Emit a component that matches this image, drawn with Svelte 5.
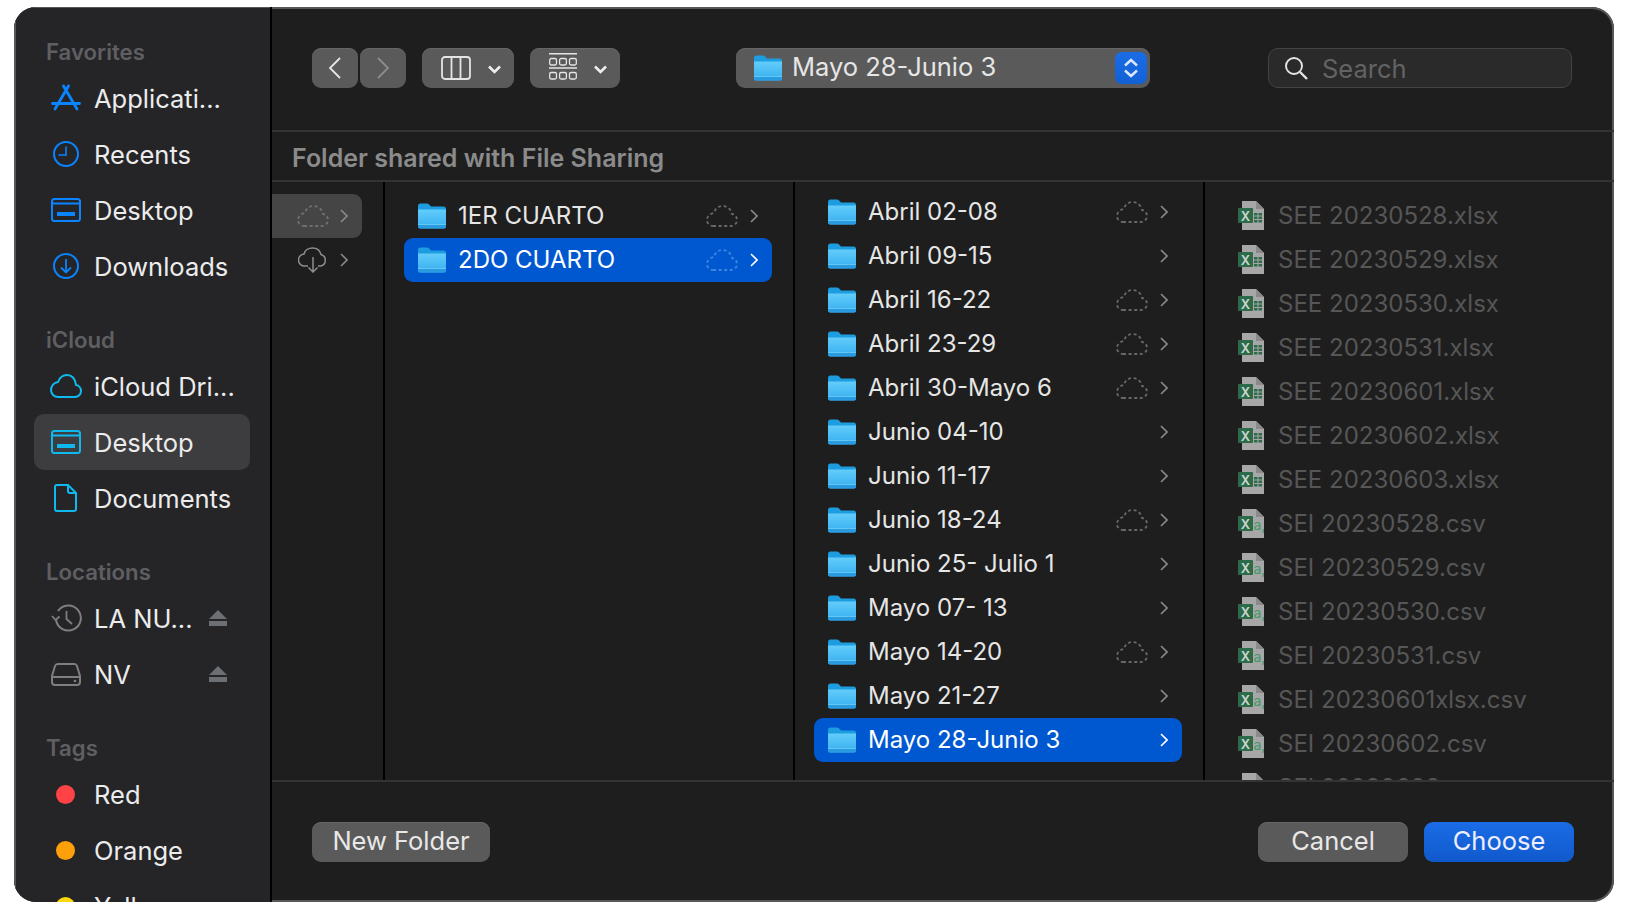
<script>
  const sections = [
    { title: 'Favorites', items: [
      { icon: 'apps', label: 'Applicati...', tone: 'blue' },
      { icon: 'clock', label: 'Recents', tone: 'blue' },
      { icon: 'desk', label: 'Desktop', tone: 'blue' },
      { icon: 'down', label: 'Downloads', tone: 'blue' }
    ]},
    { title: 'iCloud', items: [
      { icon: 'cloud', label: 'iCloud Dri...', tone: 'cyan' },
      { icon: 'desk', label: 'Desktop', tone: 'cyan', active: true },
      { icon: 'doc', label: 'Documents', tone: 'cyan' }
    ]},
    { title: 'Locations', items: [
      { icon: 'machine', label: 'LA NU...', tone: 'gray', eject: true },
      { icon: 'drive', label: 'NV', tone: 'gray', eject: true }
    ]},
    { title: 'Tags', items: [
      { dot: '#ff4245', label: 'Red' },
      { dot: '#ff9f0a', label: 'Orange' },
      { dot: '#ffd60a', label: 'Yellow' }
    ]}
  ];
  const cuartos = [
    { name: '1ER CUARTO', cloud: true },
    { name: '2DO CUARTO', cloud: true, selected: true }
  ];
  const weeks = [
    { name: 'Abril 02-08', cloud: true },
    { name: 'Abril 09-15' },
    { name: 'Abril 16-22', cloud: true },
    { name: 'Abril 23-29', cloud: true },
    { name: 'Abril 30-Mayo 6', cloud: true },
    { name: 'Junio 04-10' },
    { name: 'Junio 11-17' },
    { name: 'Junio 18-24', cloud: true },
    { name: 'Junio 25- Julio 1' },
    { name: 'Mayo 07- 13' },
    { name: 'Mayo 14-20', cloud: true },
    { name: 'Mayo 21-27' },
    { name: 'Mayo 28-Junio 3', selected: true }
  ];
  const files = [
    'SEE 20230528.xlsx', 'SEE 20230529.xlsx', 'SEE 20230530.xlsx', 'SEE 20230531.xlsx',
    'SEE 20230601.xlsx', 'SEE 20230602.xlsx', 'SEE 20230603.xlsx',
    'SEI 20230528.csv', 'SEI 20230529.csv', 'SEI 20230530.csv', 'SEI 20230531.csv',
    'SEI 20230601xlsx.csv', 'SEI 20230602.csv', 'SEI 20230603.csv'
  ];
</script>

{#snippet folder()}
  <svg class="folder" viewBox="0 0 28 26" aria-hidden="true">
    <defs>
      <linearGradient id="fg" x1="0" y1="0" x2="0" y2="1">
        <stop offset="0" stop-color="#63cdfb" />
        <stop offset="1" stop-color="#35aeef" />
      </linearGradient>
    </defs>
    <path d="M0 3a2.500 2.500 0 0 1 2.500-2.500h6.500c1.500 0 2 .8 3 2l1 1h12.500a2.500 2.500 0 0 1 2.500 2.500v3H0z" fill="#1d9ce0" />
    <path d="M0 6.500h28v17a2 2 0 0 1-2 2H2a2 2 0 0 1-2-2z" fill="url(#fg)" />
    <rect y="21" width="28" height="1" fill="#7bd3f8" opacity=".6" />
    <path d="M0 22h28v1.500a2 2 0 0 1-2 2H2a2 2 0 0 1-2-2z" fill="#2a9be0" />
  </svg>
{/snippet}

{#snippet dashCloud()}
  <svg class="dcloud" viewBox="0 0 32 22" aria-hidden="true">
    <path d="M7 21h18a6 6 0 0 0 6-6 6 6 0 0 0-5-6C25 4 21 1 16.500 1 12 1 9 4 8 8c-4 .5-7 3.500-7 7a6 6 0 0 0 6 6z" fill="none" stroke="currentColor" stroke-width="1.800" stroke-dasharray="3 2.600" />
  </svg>
{/snippet}

{#snippet chev()}
  <svg class="chev" viewBox="0 0 8 14" aria-hidden="true">
    <path d="M1 1l6 6-6 6" fill="none" stroke="currentColor" stroke-width="1.600" />
  </svg>
{/snippet}

{#snippet rows(list)}
  {#each list as r}
    <div class="row" class:sel={r.selected}>
      {@render folder()}
      <span class="name">{r.name}</span>
      {#if r.cloud}{@render dashCloud()}{/if}
      {@render chev()}
    </div>
  {/each}
{/snippet}

{#snippet sideIcon(name)}
  <svg class="sicon" viewBox="0 0 32 28" aria-hidden="true" fill="none" stroke="currentColor" stroke-width="2">
    {#if name === 'apps'}
      <path d="M13.500 2L27 25M18.500 2L5 25M2.500 19.500h27" stroke-width="2.800" stroke-linecap="round" />
    {:else if name === 'clock'}
      <circle cx="16" cy="14" r="12" /><path d="M16 6.500V15H8.500" stroke-width="1.600" />
    {:else if name === 'desk'}
      <rect x="2" y="3" width="28" height="22" rx="2.500" /><path d="M2 7.500h28" /><rect x="7" y="16" width="18" height="4" rx=".5" fill="currentColor" stroke="none" />
    {:else if name === 'down'}
      <circle cx="16" cy="14" r="12" /><path d="M16 7v13M11 15.500l5 5 5-5" stroke-width="1.800" />
    {:else if name === 'cloud'}
      <path d="M8 25h17a6 6 0 0 0 6-6 6 6 0 0 0-5-6C25.500 6.500 21.500 3 17 3c-4.500 0-7.500 3-9 7-4 .5-7 4-7 8a7 7 0 0 0 7 7z" />
    {:else if name === 'doc'}
      <path d="M7 1h11l8 8v16a2 2 0 0 1-2 2H7a2 2 0 0 1-2-2V3a2 2 0 0 1 2-2zM18 1v6a2 2 0 0 0 2 2h6" />
    {:else if name === 'machine'}
      <path d="M8 7a12.500 12.500 0 1 1-2 9" /><path d="M2 12l3.500 4 4-3.500M16.500 7v8l5.500 5" stroke-width="1.800" />
    {:else if name === 'drive'}
      <path d="M8 4h16a3 3 0 0 1 3 2l3 10v6a3 3 0 0 1-3 3H5a3 3 0 0 1-3-3v-6L5 6a3 3 0 0 1 3-2zM2 17h28" /><circle cx="25" cy="21" r="1.300" fill="currentColor" stroke="none" />
    {/if}
  </svg>
{/snippet}

{#snippet xl(kind)}
  <svg class="xl" viewBox="0 0 26 29" aria-hidden="true">
    <path d="M4 0h14l8 8v21H4z" fill="#a7a7a7" />
    <path d="M18 0l8 8h-8z" fill="#8a8a8a" />
    {#if kind === 'xlsx'}
      <g fill="#2f6b4b">
        <rect x="16" y="12" width="3.500" height="2.500" /><rect x="20.500" y="12" width="3.500" height="2.500" />
        <rect x="16" y="15.500" width="3.500" height="2.500" /><rect x="20.500" y="15.500" width="3.500" height="2.500" />
        <rect x="16" y="19" width="3.500" height="2.500" /><rect x="20.500" y="19" width="3.500" height="2.500" />
      </g>
    {:else}
      <text x="15.500" y="20.500" class="xl-a">a,</text>
    {/if}
    <rect x="0" y="7" width="15" height="15" rx="1" fill="#2c6a49" />
    <text x="7.500" y="19.500" text-anchor="middle" class="xl-x">X</text>
  </svg>
{/snippet}

<div class="win">
  <aside class="side">
    {#each sections as s}
      <section class="group">
        <h3>{s.title}</h3>
        {#each s.items as it}
          <div class="sitem" class:active={it.active}>
            {#if it.dot}
              <span class="dotbox"><span class="dot" style:background={it.dot}></span></span>
            {:else}
              <span class="tone {it.tone}">{@render sideIcon(it.icon)}</span>
            {/if}
            <span class="slabel">{it.label}</span>
            {#if it.eject}
              <svg class="eject" viewBox="0 0 18 18" aria-hidden="true"><path d="M9 1l9 9H0z" fill="currentColor" /><rect y="12" width="18" height="5" fill="currentColor" /></svg>
            {/if}
          </div>
        {/each}
      </section>
    {/each}
  </aside>

  <div class="main">
    <header class="toolbar">
      <div class="navs">
        <button class="btn nav"><svg viewBox="0 0 14 24" class="navi"><path d="M12 2L2 12l10 10" fill="none" stroke="#e5e5e5" stroke-width="1.800" /></svg></button>
        <button class="btn nav"><svg viewBox="0 0 14 24" class="navi"><path d="M2 2l10 10L2 22" fill="none" stroke="#8c8c8c" stroke-width="1.800" /></svg></button>
      </div>
      <button class="btn view w92">
        <svg viewBox="0 0 30 24" class="vi"><rect x="1" y="1" width="28" height="22" rx="3" fill="none" stroke="#e5e5e5" stroke-width="1.800" /><path d="M10.500 1v22M19.500 1v22" stroke="#e5e5e5" stroke-width="1.800" /></svg>
        <svg viewBox="0 0 14 9" class="dn"><path d="M1.500 1.500L7 7l5.500-5.500" fill="none" stroke="#eee" stroke-width="2.600" /></svg>
      </button>
      <button class="btn view w90">
        <svg viewBox="0 0 28 28" class="vi2" fill="none" stroke="#e5e5e5" stroke-width="1.300">
          <path d="M0 .8h28M0 15h28" stroke-width="1.500" />
          <rect x=".7" y="5.500" width="6.800" height="6.500" rx="1.500" /><rect x="10.600" y="5.500" width="6.800" height="6.500" rx="1.500" /><rect x="20.500" y="5.500" width="6.800" height="6.500" rx="1.500" />
          <rect x=".7" y="19.500" width="6.800" height="6.500" rx="1.500" /><rect x="10.600" y="19.500" width="6.800" height="6.500" rx="1.500" /><rect x="20.500" y="19.500" width="6.800" height="6.500" rx="1.500" />
        </svg>
        <svg viewBox="0 0 14 9" class="dn"><path d="M1.500 1.500L7 7l5.500-5.500" fill="none" stroke="#eee" stroke-width="2.600" /></svg>
      </button>
      <div class="path">
        {@render folder()}
        <span class="pname">Mayo 28-Junio 3</span>
        <span class="stepper">
          <svg viewBox="0 0 16 26" class="st"><path d="M2 10.500L8 5l6 5.500M2 15.500L8 21l6-5.500" fill="none" stroke="#dbe8ff" stroke-width="2.400" /></svg>
        </span>
      </div>
      <div class="search">
        <svg viewBox="0 0 24 24" class="mag"><circle cx="10" cy="10" r="8" fill="none" stroke="#e5e5e5" stroke-width="1.900" /><path d="M16 16l7 7" stroke="#e5e5e5" stroke-width="2.400" /></svg>
        <span>Search</span>
      </div>
    </header>

    <div class="crumb">Folder shared with File Sharing</div>

    <div class="cols">
      <div class="col c1">
        <div class="row r1 hl">{@render dashCloud()}{@render chev()}</div>
        <div class="row r1">
          <svg class="dl" viewBox="0 0 30 26" fill="none" stroke="currentColor" stroke-width="1.500">
            <path d="M10 19H7a6 6 0 0 1-1-12C7 3 11 1 14.500 1 18.500 1 22 3.500 23 7.500a6 6 0 0 1 0 11.500h-3" />
            <path d="M15 10v15M10.500 20.500L15 25l4.500-4.500" />
          </svg>
          {@render chev()}
        </div>
      </div>
      <div class="col c2">{@render rows(cuartos)}</div>
      <div class="col c3">{@render rows(weeks)}</div>
      <div class="col c4">
        {#each files as f}
          <div class="frow">
            {@render xl(f.endsWith('csv') ? 'csv' : 'xlsx')}
            <span class="fname">{f}</span>
          </div>
        {/each}
      </div>
    </div>

    <footer class="foot">
      <button class="btn txt nf">New Folder</button>
      <div class="spacer"></div>
      <button class="btn txt act">Cancel</button>
      <button class="btn txt act pri">Choose</button>
    </footer>
  </div>
</div>

<style>
  :global(body) { background: #fff; }
  * { box-sizing: border-box; }
  .win {
    margin: 7px 0 0 14px;
    width: 1600px;
    height: 895px;
    border-radius: 22px;
    overflow: hidden;
    display: flex;
    background: #1e1e1e;
    box-shadow: inset 0 0 0 2px #58585a;
    font-family: Inter, "Liberation Sans", sans-serif;
    color: #e6e6e6;
    font-size: 25.5px;
    position: relative;
  }
  .side {
    width: 256px;
    flex: none;
    background: #252528;
    border-left: 2px solid #58585a;
    border-top: 1px solid #58585a;
    padding: 26px 20px 0 18px;
    overflow: hidden;
    height: 100%;
  }
  .group { margin-bottom: 28px; }
  h3 {
    margin: 0 0 0 12px;
    height: 36px;
    line-height: 35px;
    font-size: 22.2px;
    font-weight: 600;
    color: #5f5f62;
  }
  .sitem {
    height: 56px;
    display: flex;
    align-items: center;
    padding-left: 16px;
    border-radius: 10px;
    position: relative;
  }
  .sitem.active { background: #3d3d40; }
  .tone { display: flex; width: 32px; height: 28px; }
  .blue { color: #0a84ff; }
  .cyan { color: #0fb9ee; }
  .gray { color: #7e7e80; }
  .sicon { width: 32px; height: 28px; }
  .dotbox { width: 32px; display: flex; justify-content: center; }
  .dot { width: 19px; height: 19px; border-radius: 50%; margin-left: -1px; }
  .slabel { margin-left: 12px; white-space: nowrap; color: #ececec; }
  .eject { position: absolute; left: 175px; width: 18px; height: 18px; color: #6c6f73; }

  .main { flex: 1; min-width: 0; display: flex; flex-direction: column; border-left: 2px solid #000; }
  .toolbar {
    height: 125px;
    flex: none;
    display: flex;
    align-items: flex-start;
    padding: 41px 0 0 40px;
    border-bottom: 2px solid #333;
  }
  .btn {
    border: 0;
    background: #5a5a5a;
    border-radius: 9px;
    color: #e8e8e8;
    font: inherit;
    padding: 0;
    height: 40px;
    display: flex;
    align-items: center;
    justify-content: center;
    box-shadow: inset 0 1px 0 #666;
  }
  .navs { display: flex; gap: 2px; }
  .nav { width: 46px; }
  .navi { width: 14px; height: 24px; }
  .view { margin-left: 16px; gap: 16px; justify-content: flex-start; padding-left: 19px; }
  .w92 { width: 92px; }
  .w90 { width: 90px; margin-left: 16px; padding-left: 19px; }
  .vi { width: 30px; height: 24px; }
  .vi2 { width: 28px; height: 28px; margin-top: -2px; }
  .dn { width: 15px; height: 9px; margin-top: 2px; }
  .path {
    margin-left: 116px;
    width: 414px;
    height: 40px;
    background: #5a5a5a;
    border-radius: 9px;
    display: flex;
    align-items: center;
    padding-left: 18px;
    position: relative;
    box-shadow: inset 0 1px 0 #666;
  }
  .path .folder { width: 28px; height: 26px; }
  .pname { margin-left: 10px; margin-top: -4px; }
  .stepper {
    position: absolute;
    right: 3px;
    top: 4px;
    width: 32px;
    height: 32px;
    border-radius: 7px;
    background: linear-gradient(#1a6ce6, #1260d4);
    display: flex;
    align-items: center;
    justify-content: center;
  }
  .st { width: 16px; height: 26px; }
  .search {
    margin-left: 118px;
    width: 304px;
    height: 40px;
    border-radius: 10px;
    background: #2a2a2a;
    border: 1px solid #444;
    display: flex;
    align-items: center;
    padding-left: 15px;
    color: #636363;
  }
  .mag { width: 24px; height: 24px; flex: none; }
  .search span { margin-left: 14px; }

  .crumb {
    height: 50px;
    flex: none;
    display: flex;
    align-items: center;
    padding: 4px 0 0 20px;
    font-size: 25px;
    font-weight: 600;
    color: #8b8b8b;
    border-bottom: 2px solid #333;
  }
  .cols { height: 600px; flex: none; display: grid; grid-template-columns: 113px 410px 410px 1fr; overflow: hidden; font-size: 24px; }
  .col { border-right: 2px solid #000; overflow: hidden; min-width: 0; }
  .col:last-child { border-right: 0; }
  .c1 { padding-top: 12px; }
  .c2 { padding: 12px 21px 0 19px; }
  .c3 { padding: 8px 21px 0 19px; }
  .c4 { padding: 11px 0 0 33px; }
  .row {
    height: 44px;
    display: flex;
    align-items: center;
    padding-left: 14px;
    padding-right: 14px;
    border-radius: 9px;
    color: #e6e6e6;
    position: relative;
  }
  .row.sel { background: #0058d0; color: #fff; }
  .row.r1 { border-radius: 0 9px 9px 0; width: 90px; padding: 0; }
  .row.hl { background: #454545; }
  .folder { width: 28px; height: 26px; flex: none; }
  .name { margin-left: 12px; padding-bottom: 2px; white-space: nowrap; flex: 1; }
  .dcloud { width: 32px; height: 22px; color: #686868; flex: none; margin-right: 12px; }
  .sel .dcloud { color: #3e85e0; }
  .chev { width: 8px; height: 14px; color: #8a8a8a; flex: none; }
  .sel .chev { color: #fff; }
  .r1 .dcloud { position: absolute; left: 25px; color: #707070; }
  .r1 .dl { position: absolute; left: 26px; width: 30px; height: 26px; color: #8e8e8e; }
  .r1 .chev { position: absolute; left: 68px; }
  .frow { height: 44px; display: flex; align-items: center; }
  .xl { width: 26px; height: 29px; flex: none; }
  .xl-x { font: 600 13px Inter, sans-serif; fill: #c9d6cf; }
  .xl-a { font: 400 14px Inter, sans-serif; fill: #3d9a6b; }
  .fname { margin-left: 14px; color: #565656; white-space: nowrap; }

  .foot {
    flex: 1;
    border-top: 2px solid #333;
    display: flex;
    align-items: flex-start;
    padding: 40px 40px 0 40px;
    margin-top: -2px;
  }
  .spacer { flex: 1; }
  .txt { height: 40px; padding-bottom: 4px; }
  .nf { width: 178px; }
  .act { width: 150px; margin-left: 16px; }
  .pri { background: linear-gradient(#1a6ce6, #1059cc); color: #eef; box-shadow: none; }
</style>
